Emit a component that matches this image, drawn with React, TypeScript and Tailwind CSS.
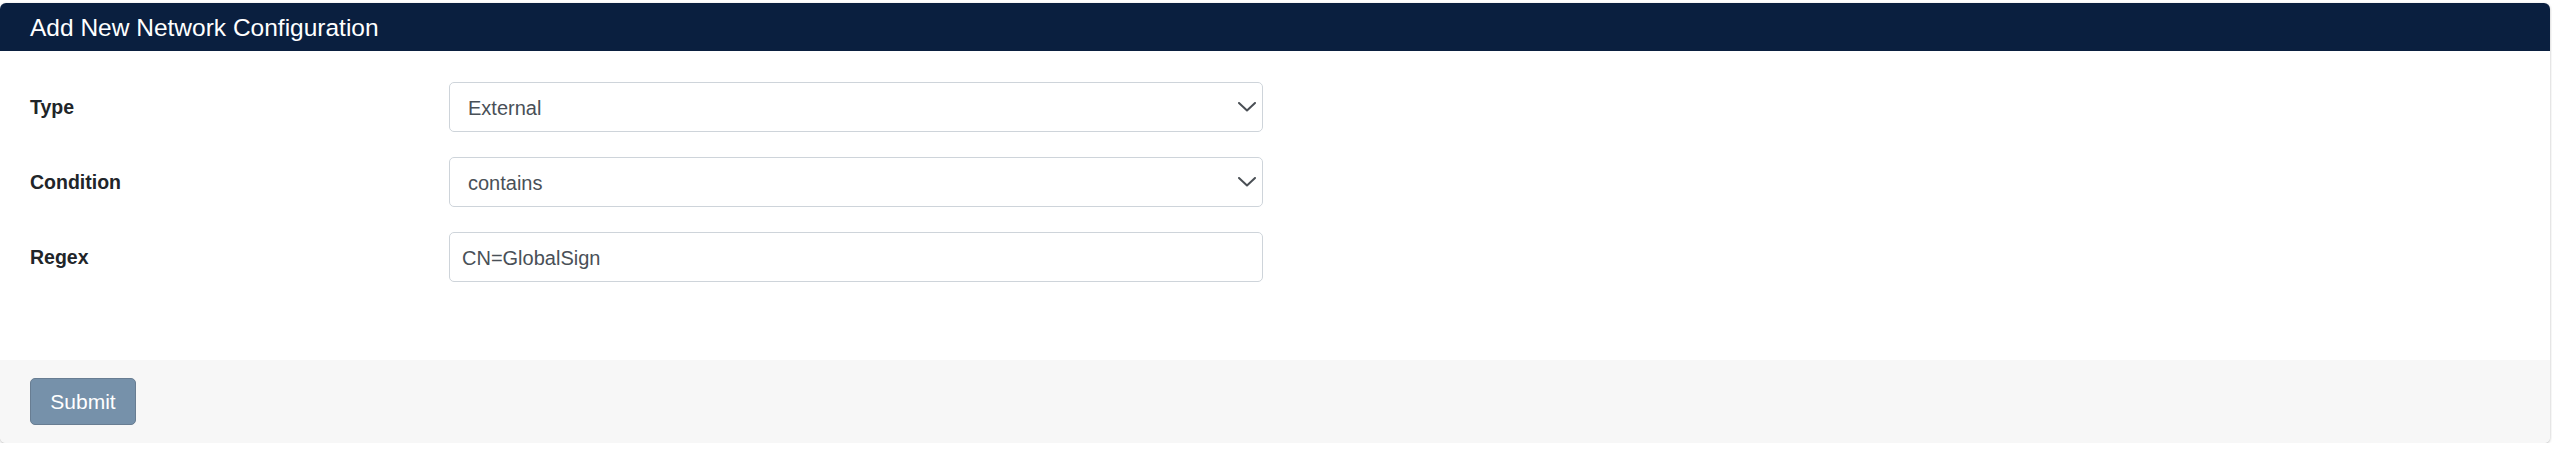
import type { ReactNode } from 'react'

const font = { fontFamily: '"Liberation Sans", Arial, sans-serif' }

const Chevron = () => (
  <svg width="18" height="10" viewBox="0 0 18 10" fill="none" className="shrink-0">
    <polyline points="1,1 9,8.5 17,1" stroke="#4a4f55" strokeWidth="2" strokeLinecap="round" strokeLinejoin="round" />
  </svg>
)

const Row = ({ label, children }: { label: string; children: ReactNode }) => (
  <div className="flex items-center">
    <label className="w-[419px] shrink-0 pt-[2px] text-[19.5px] font-bold text-[#212529]">{label}</label>
    <div className="w-[814px]">{children}</div>
  </div>
)

const FakeSelect = ({ value }: { value: string }) => (
  <div className="flex h-[50px] items-center justify-between rounded-[5px] border border-[#ced4da] bg-white pl-[18px] pr-[6px] text-[20px] text-[#495057]">
    <span className="pt-[2px]">{value}</span>
    <Chevron />
  </div>
)

export default function App() {
  return (
    <div className="bg-white pr-[2px] pt-[3px]" style={font}>
      <div className="overflow-hidden rounded-[6px] bg-white shadow-[0_1px_3px_rgba(0,0,0,0.28)]">
        <div className="flex h-[48px] items-center bg-[#0a1f3f] px-[30px] pt-[1px] text-[24.5px] leading-[25px] text-white">
          Add New Network Configuration
        </div>

        <div className="flex flex-col gap-[25px] px-[30px] pb-[78px] pt-[31px]">
          <Row label="Type">
            <FakeSelect value="External" />
          </Row>
          <Row label="Condition">
            <FakeSelect value="contains" />
          </Row>
          <Row label="Regex">
            <input
              readOnly
              value="CN=GlobalSign"
              className="h-[50px] w-full rounded-[5px] border border-[#ced4da] bg-white pl-[12px] pt-[2px] text-[20px] text-[#495057] outline-none"
            />
          </Row>
        </div>

        <div className="flex h-[83px] items-center bg-[#f7f7f7] px-[30px]">
          <button className="h-[47px] w-[106px] rounded-[5px] border border-[#687d92] bg-[#7691aa] pt-[1px] text-[21px] text-white">
            Submit
          </button>
        </div>
      </div>
    </div>
  )
}
